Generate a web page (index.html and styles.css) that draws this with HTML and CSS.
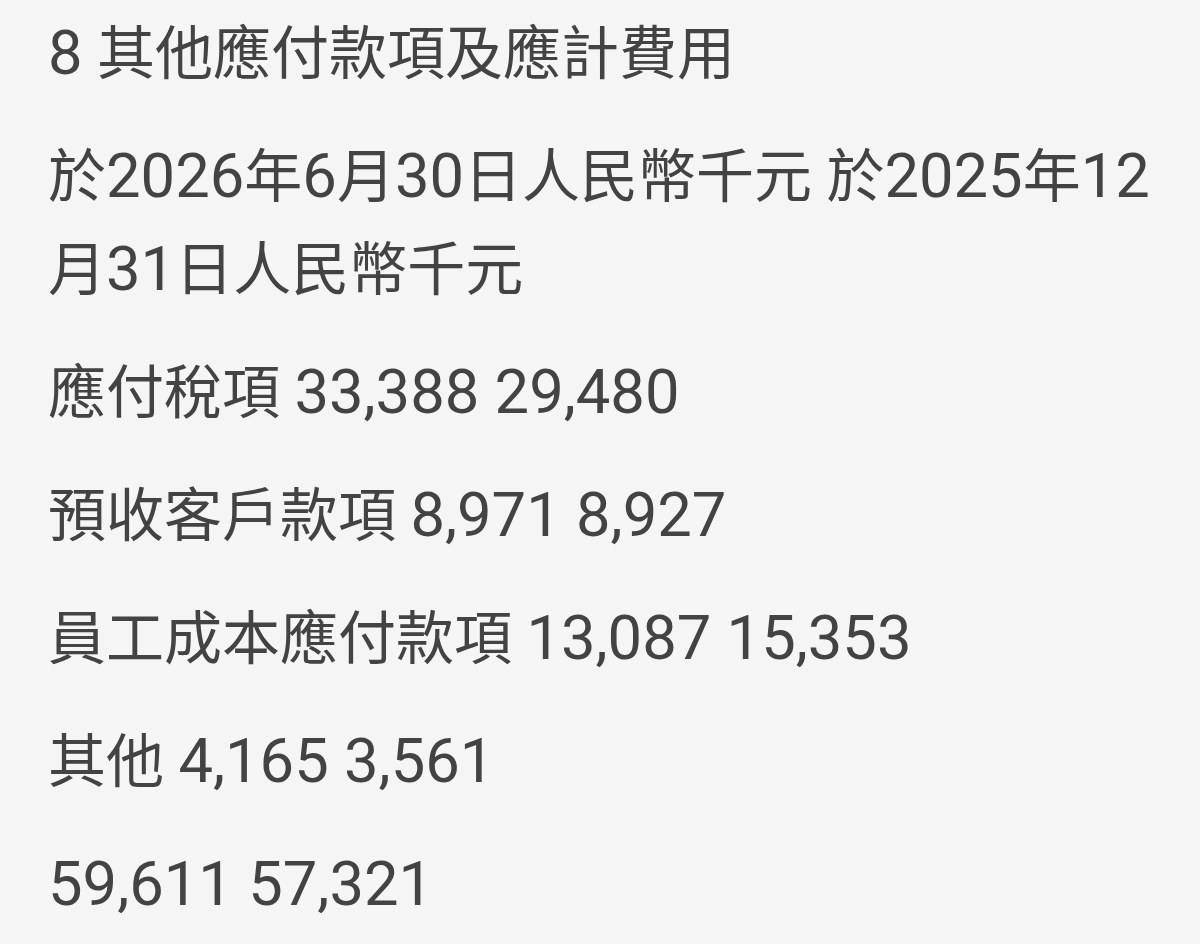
FILE: index.html
```html
<!DOCTYPE html>
<html lang="zh-Hant">
<head>
<meta charset="utf-8">
<link rel="stylesheet" href="styles.css">
</head>
<body>
<main class="page">
  <p class="row"><span class="num">8</span> 其他應付款項及應計費用</p>
  <p class="row">於<span class="num">2026</span>年<span class="num">6</span>月<span class="num">30</span>日人民幣千元 於<span class="num">2025</span>年<span class="num">12</span>月<span class="num">31</span>日人民幣千元</p>
  <p class="row">應付稅項 <span class="num">33,388 29,480</span></p>
  <p class="row">預收客戶款項 <span class="num">8,971 8,927</span></p>
  <p class="row">員工成本應付款項 <span class="num">13,087 15,353</span></p>
  <p class="row">其他 <span class="num">4,165 3,561</span></p>
  <p class="row"><span class="num">59,611 57,321</span></p>
</main>
</body>
</html>
```

FILE: styles.css
```css
html, body {
  margin: 0;
  padding: 0;
  background: #f5f5f5;
}
.page {
  width: 1200px;
  height: 944px;
  box-sizing: border-box;
  padding: 8px 0 0 48px;
  overflow: hidden;
  font-family: Roboto, "Noto Sans CJK TC", sans-serif;
  font-size: 58px;
  line-height: 93px;
  color: #434343;
}
.row {
  margin: 0 0 30px 0;
}
.num {
  font-size: 61.5px;
  line-height: 1;
}
```
